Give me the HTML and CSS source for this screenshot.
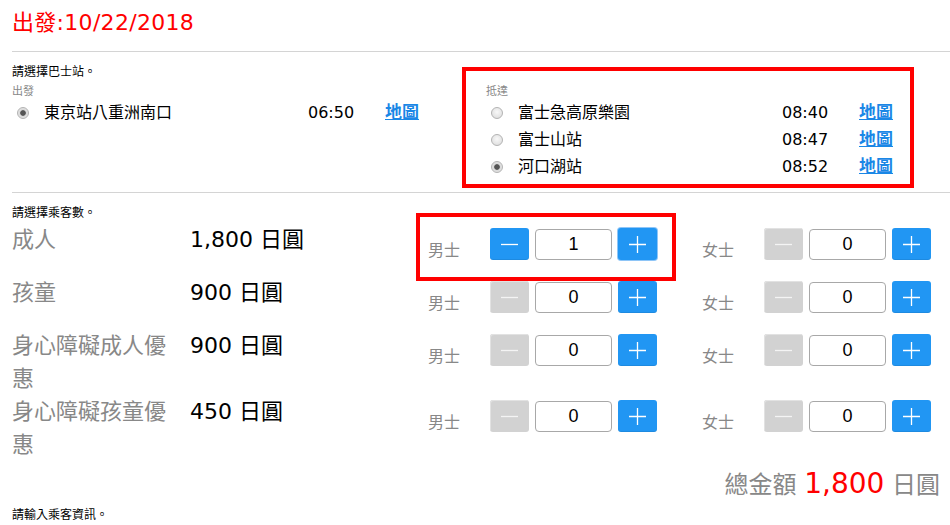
FILE: index.html
```html
<!DOCTYPE html>
<html lang="zh-Hant">
<head>
    <meta charset="UTF-8">
    <meta name="viewport" content="width=device-width, initial-scale=1.0">
    <title>巴士預約</title>
    <link rel="stylesheet" href="styles.css">
</head>
<body>

    <div class="page">

        <!-- Date -->
        <h1 class="depart-date">出發:10/22/2018</h1>
        <hr class="divider">

        <!-- Bus stops -->
        <section class="stops">
            <div class="stop-col">
                <p class="hint">請選擇巴士站。</p>
                <p class="stop-label">出發</p>
                <label class="stop">
                    <input type="radio" name="from" checked>
                    <span>東京站八重洲南口</span>
                    <span>06:50</span>
                    <a class="map-link" href="#">地圖</a>
                </label>
            </div>

            <div class="stop-col arrival">
                <p class="stop-label">抵達</p>
                <label class="stop">
                    <input type="radio" name="to">
                    <span>富士急高原樂園</span>
                    <span>08:40</span>
                    <a class="map-link" href="#">地圖</a>
                </label>
                <label class="stop">
                    <input type="radio" name="to">
                    <span>富士山站</span>
                    <span>08:47</span>
                    <a class="map-link" href="#">地圖</a>
                </label>
                <label class="stop">
                    <input type="radio" name="to" checked>
                    <span>河口湖站</span>
                    <span>08:52</span>
                    <a class="map-link" href="#">地圖</a>
                </label>
            </div>
        </section>
        <hr class="divider tight">

        <!-- Passengers -->
        <section class="passengers">
            <p class="hint">請選擇乘客數。</p>

            <div class="fare-row">
                <div class="fare-type">成人</div>
                <div class="fare-price">1,800 日圓</div>
                <div class="gender">
                    <span class="gender-label">男士</span>
                    <button class="step"><svg width="17" height="17" viewBox="0 0 17 17"><path d="M0 8.5h17"/></svg></button>
                    <input class="count" type="text" value="1">
                    <button class="step focus"><svg width="17" height="17" viewBox="0 0 17 17"><path d="M0 8.5h17M8.5 0v17"/></svg></button>
                    <span class="mark"></span>
                </div>
                <div class="gender">
                    <span class="gender-label">女士</span>
                    <button class="step off"><svg width="17" height="17" viewBox="0 0 17 17"><path d="M0 8.5h17"/></svg></button>
                    <input class="count" type="text" value="0">
                    <button class="step"><svg width="17" height="17" viewBox="0 0 17 17"><path d="M0 8.5h17M8.5 0v17"/></svg></button>
                </div>
            </div>

            <div class="fare-row">
                <div class="fare-type">孩童</div>
                <div class="fare-price">900 日圓</div>
                <div class="gender">
                    <span class="gender-label">男士</span>
                    <button class="step off"><svg width="17" height="17" viewBox="0 0 17 17"><path d="M0 8.5h17"/></svg></button>
                    <input class="count" type="text" value="0">
                    <button class="step"><svg width="17" height="17" viewBox="0 0 17 17"><path d="M0 8.5h17M8.5 0v17"/></svg></button>
                </div>
                <div class="gender">
                    <span class="gender-label">女士</span>
                    <button class="step off"><svg width="17" height="17" viewBox="0 0 17 17"><path d="M0 8.5h17"/></svg></button>
                    <input class="count" type="text" value="0">
                    <button class="step"><svg width="17" height="17" viewBox="0 0 17 17"><path d="M0 8.5h17M8.5 0v17"/></svg></button>
                </div>
            </div>

            <div class="fare-row">
                <div class="fare-type">身心障礙成人優惠</div>
                <div class="fare-price">900 日圓</div>
                <div class="gender">
                    <span class="gender-label">男士</span>
                    <button class="step off"><svg width="17" height="17" viewBox="0 0 17 17"><path d="M0 8.5h17"/></svg></button>
                    <input class="count" type="text" value="0">
                    <button class="step"><svg width="17" height="17" viewBox="0 0 17 17"><path d="M0 8.5h17M8.5 0v17"/></svg></button>
                </div>
                <div class="gender">
                    <span class="gender-label">女士</span>
                    <button class="step off"><svg width="17" height="17" viewBox="0 0 17 17"><path d="M0 8.5h17"/></svg></button>
                    <input class="count" type="text" value="0">
                    <button class="step"><svg width="17" height="17" viewBox="0 0 17 17"><path d="M0 8.5h17M8.5 0v17"/></svg></button>
                </div>
            </div>

            <div class="fare-row">
                <div class="fare-type">身心障礙孩童優惠</div>
                <div class="fare-price">450 日圓</div>
                <div class="gender">
                    <span class="gender-label">男士</span>
                    <button class="step off"><svg width="17" height="17" viewBox="0 0 17 17"><path d="M0 8.5h17"/></svg></button>
                    <input class="count" type="text" value="0">
                    <button class="step"><svg width="17" height="17" viewBox="0 0 17 17"><path d="M0 8.5h17M8.5 0v17"/></svg></button>
                </div>
                <div class="gender">
                    <span class="gender-label">女士</span>
                    <button class="step off"><svg width="17" height="17" viewBox="0 0 17 17"><path d="M0 8.5h17"/></svg></button>
                    <input class="count" type="text" value="0">
                    <button class="step"><svg width="17" height="17" viewBox="0 0 17 17"><path d="M0 8.5h17M8.5 0v17"/></svg></button>
                </div>
            </div>
        </section>

        <!-- Total -->
        <div class="total">總金額 <span class="total-amount">1,800</span> 日圓</div>

        <p class="hint next">請輸入乘客資訊。</p>
    </div>

</body>
</html>
```

FILE: styles.css
```css
/* Global Styles */
body {
    margin: 0;
    background: #fff;
    color: #000;
    font-family: "DejaVu Sans", "Noto Sans CJK TC", sans-serif;
    overflow: hidden;
}

.page {
    padding-left: 12px;
}

.depart-date {
    margin: 0;
    padding-top: 8px;
    font-size: 22px;
    line-height: 30px;
    font-weight: normal;
    letter-spacing: 0.3px;
    color: #f00;
}

.divider {
    height: 0;
    margin: 13px 0 0;
    border: 0;
    border-top: 1px solid #d4d4d4;
}

.divider.tight {
    margin-top: 4px;
}

.hint {
    margin: 0;
    font-size: 12px;
    line-height: 16px;
}

/* Bus Stops */
.stops {
    display: flex;
    align-items: flex-start;
}

.stop-col {
    flex: none;
    width: 450px;
    padding-top: 12px;
}

.stop-col.arrival {
    width: 452px;
    box-sizing: border-box;
    margin-top: 15px;
    padding: 13px 0 4px 20px;
    border: 4px solid #f00;
}

.stop-label {
    margin: 4px 0 0;
    font-size: 11px;
    line-height: 15px;
    color: #888;
}

.arrival .stop-label {
    margin-top: 0;
}

.stop {
    display: grid;
    grid-template-columns: 32px 264px 77px auto;
    align-items: center;
    height: 27px;
    font-size: 16px;
    line-height: 27px;
}

.stop input {
    -webkit-appearance: none;
    appearance: none;
    width: 12px;
    height: 12px;
    margin: 0 0 0 5px;
    box-sizing: border-box;
    border: 1px solid #b3b3b3;
    border-radius: 50%;
    background: radial-gradient(circle at 50% 40%, #f8f8f8, #d9d9d9);
}

.stop input:checked {
    background: radial-gradient(circle, #555 0 2.4px, #d8d8d8 3.2px, #eee);
}

.map-link {
    justify-self: start;
    color: #1a87e6;
    font-size: 17px;
    font-weight: bold;
    text-decoration: underline;
}

/* Passengers */
.passengers {
    padding-top: 12px;
}

.passengers .hint {
    margin-bottom: 2px;
}

.fare-row {
    display: flex;
    align-items: flex-start;
}

.fare-type {
    flex: none;
    width: 160px;
    margin-right: 18px;
    font-size: 22px;
    line-height: 33px;
    color: #888;
}

.fare-price {
    flex: none;
    width: 238px;
    font-size: 22px;
    line-height: 33px;
}

.gender {
    position: relative;
    flex: none;
    width: 274px;
    display: flex;
    align-items: flex-end;
    padding: 5px 0 16px;
}

.gender + .gender {
    width: auto;
}

.gender-label {
    flex: none;
    width: 62px;
    margin-bottom: 1px;
    font-size: 16px;
    line-height: 16px;
    color: #888;
}

.step {
    flex: none;
    width: 39px;
    height: 32px;
    padding: 0;
    display: flex;
    justify-content: center;
    align-items: center;
    border: 0;
    border-radius: 3px;
    background: #2196f3;
    box-shadow: inset 0 -1px 0 rgba(0, 0, 0, 0.08);
    color: #fff;
}

.step.off {
    background: #d2d2d2;
    box-shadow: inset 1px 1px 0 #e2e2e2;
    color: #f4f4f4;
}

.step.focus {
    box-shadow: 0 0 0 1px #8ec5f7;
}

.step svg path {
    stroke: currentColor;
    stroke-width: 1.3;
}

.count {
    flex: none;
    width: 77px;
    height: 31px;
    margin: 0 6px;
    padding: 0;
    box-sizing: border-box;
    border: 1px solid #a8a8a8;
    border-radius: 4px;
    background: #fff;
    text-align: center;
    font-family: "Liberation Sans", sans-serif;
    font-size: 18px;
    color: #000;
}

/* Highlight drawn over the first counter */
.mark {
    position: absolute;
    left: -12px;
    top: -10px;
    width: 260px;
    height: 68px;
    box-sizing: border-box;
    border: 4px solid #f00;
    pointer-events: none;
}

/* Total */
.total {
    margin-top: 5px;
    padding-right: 10px;
    text-align: right;
    font-size: 24px;
    line-height: 36px;
    color: #888;
}

.total-amount {
    font-size: 28px;
    color: #f00;
}

.hint.next {
    margin-top: 4px;
}
```
